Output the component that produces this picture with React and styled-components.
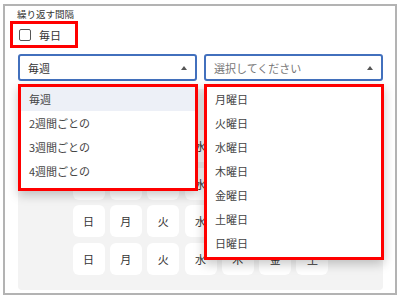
import styled, { createGlobalStyle } from "styled-components";

const Global = createGlobalStyle`
  body {
    margin: 0;
    background: #fff;
    font-family: "Noto Sans CJK JP", "Noto Sans", sans-serif;
    color: #333;
  }
`;

const intervals = ["毎週", "2週間ごとの", "3週間ごとの", "4週間ごとの"];
const weekdays = ["月曜日", "火曜日", "水曜日", "木曜日", "金曜日", "土曜日", "日曜日"];
const days = ["日", "月", "火", "水", "木", "金", "土"];

export default function App() {
  return (
    <>
      <Global />
      <Frame>
        <Label>繰り返す間隔</Label>
        <CheckRow>
          <Box />
          <CheckText>毎日</CheckText>
        </CheckRow>
        <SelectRow>
          <SelectWrap>
            <Select>
              <span>毎週</span>
              <Arrow />
            </Select>
            <Menu $pad={5}>
              {intervals.map((t, i) => (
                <Item key={t} $active={i === 0}>
                  {t}
                </Item>
              ))}
            </Menu>
          </SelectWrap>
          <SelectWrap>
            <Select $placeholder>
              <span>選択してください</span>
              <Arrow />
            </Select>
            <Menu $pad={2}>
              {weekdays.map((t) => (
                <Item key={t}>{t}</Item>
              ))}
            </Menu>
          </SelectWrap>
        </SelectRow>
        <Panel>
          {[0, 1, 2, 3].map((r) => (
            <DayRow key={r}>
              {days.map((d) => (
                <Day key={d}>{d}</Day>
              ))}
            </DayRow>
          ))}
        </Panel>
      </Frame>
    </>
  );
}

const Frame = styled.div`
  box-sizing: border-box;
  margin: 4px 0 0 3px;
  width: 394px;
  height: 291px;
  border: 2px solid #b3b3b3;
  display: flex;
  flex-direction: column;
`;

const Label = styled.div`
  margin: 1px 0 0 12px;
  font-size: 9.5px;
  line-height: 14px;
  color: #333;
`;

const CheckRow = styled.div`
  box-sizing: border-box;
  margin: 0 0 0 5px;
  width: 68px;
  height: 27px;
  border: 3px solid #ff0000;
  display: flex;
  align-items: center;
  padding-left: 6px;
  gap: 8px;
`;

const Box = styled.span`
  box-sizing: border-box;
  width: 12px;
  height: 12px;
  border: 1.5px solid #555;
  border-radius: 2px;
`;

const CheckText = styled.span`
  font-size: 11px;
  color: #333;
`;

const SelectRow = styled.div`
  display: flex;
  gap: 7px;
  margin: 6px 0 0 13px;
  position: relative;
  z-index: 2;
`;

const SelectWrap = styled.div`
  position: relative;
  width: 179px;
`;

const Select = styled.div`
  box-sizing: border-box;
  height: 27px;
  border: 2px solid #4270bd;
  border-radius: 3px;
  display: flex;
  align-items: center;
  justify-content: space-between;
  padding: 0 8px 0 8px;
  font-size: 11px;
  color: ${(p) => (p.$placeholder ? "#777" : "#333")};
`;

const Arrow = styled.span`
  width: 0;
  height: 0;
  border-left: 3px solid transparent;
  border-right: 3px solid transparent;
  border-bottom: 4px solid #555;
`;

const Menu = styled.div`
  position: absolute;
  top: calc(100% + 3px);
  left: 0;
  box-sizing: border-box;
  width: 180px;
  border: 3px solid #ff0000;
  background: #fff;
  padding-bottom: ${(p) => p.$pad}px;
  box-shadow: 0 4px 10px rgba(0, 0, 0, 0.22);
`;

const Item = styled.div`
  height: 24px;
  display: flex;
  align-items: center;
  padding-left: 8px;
  font-size: 11px;
  color: #444;
  background: ${(p) => (p.$active ? "#edf0f7" : "transparent")};
`;

const Panel = styled.div`
  margin: 8px 0 0 13px;
  width: 365px;
  box-sizing: border-box;
  background: #f3f3f3;
  border-radius: 4px;
  padding: 41px 0 15px;
  display: flex;
  flex-direction: column;
  align-items: center;
  gap: 5.7px;
`;

const DayRow = styled.div`
  display: flex;
  gap: 5.33px;
`;

const Day = styled.div`
  width: 32px;
  height: 32px;
  border-radius: 6px;
  background: #fff;
  display: flex;
  align-items: center;
  justify-content: center;
  font-size: 11px;
  color: #333;
`;
